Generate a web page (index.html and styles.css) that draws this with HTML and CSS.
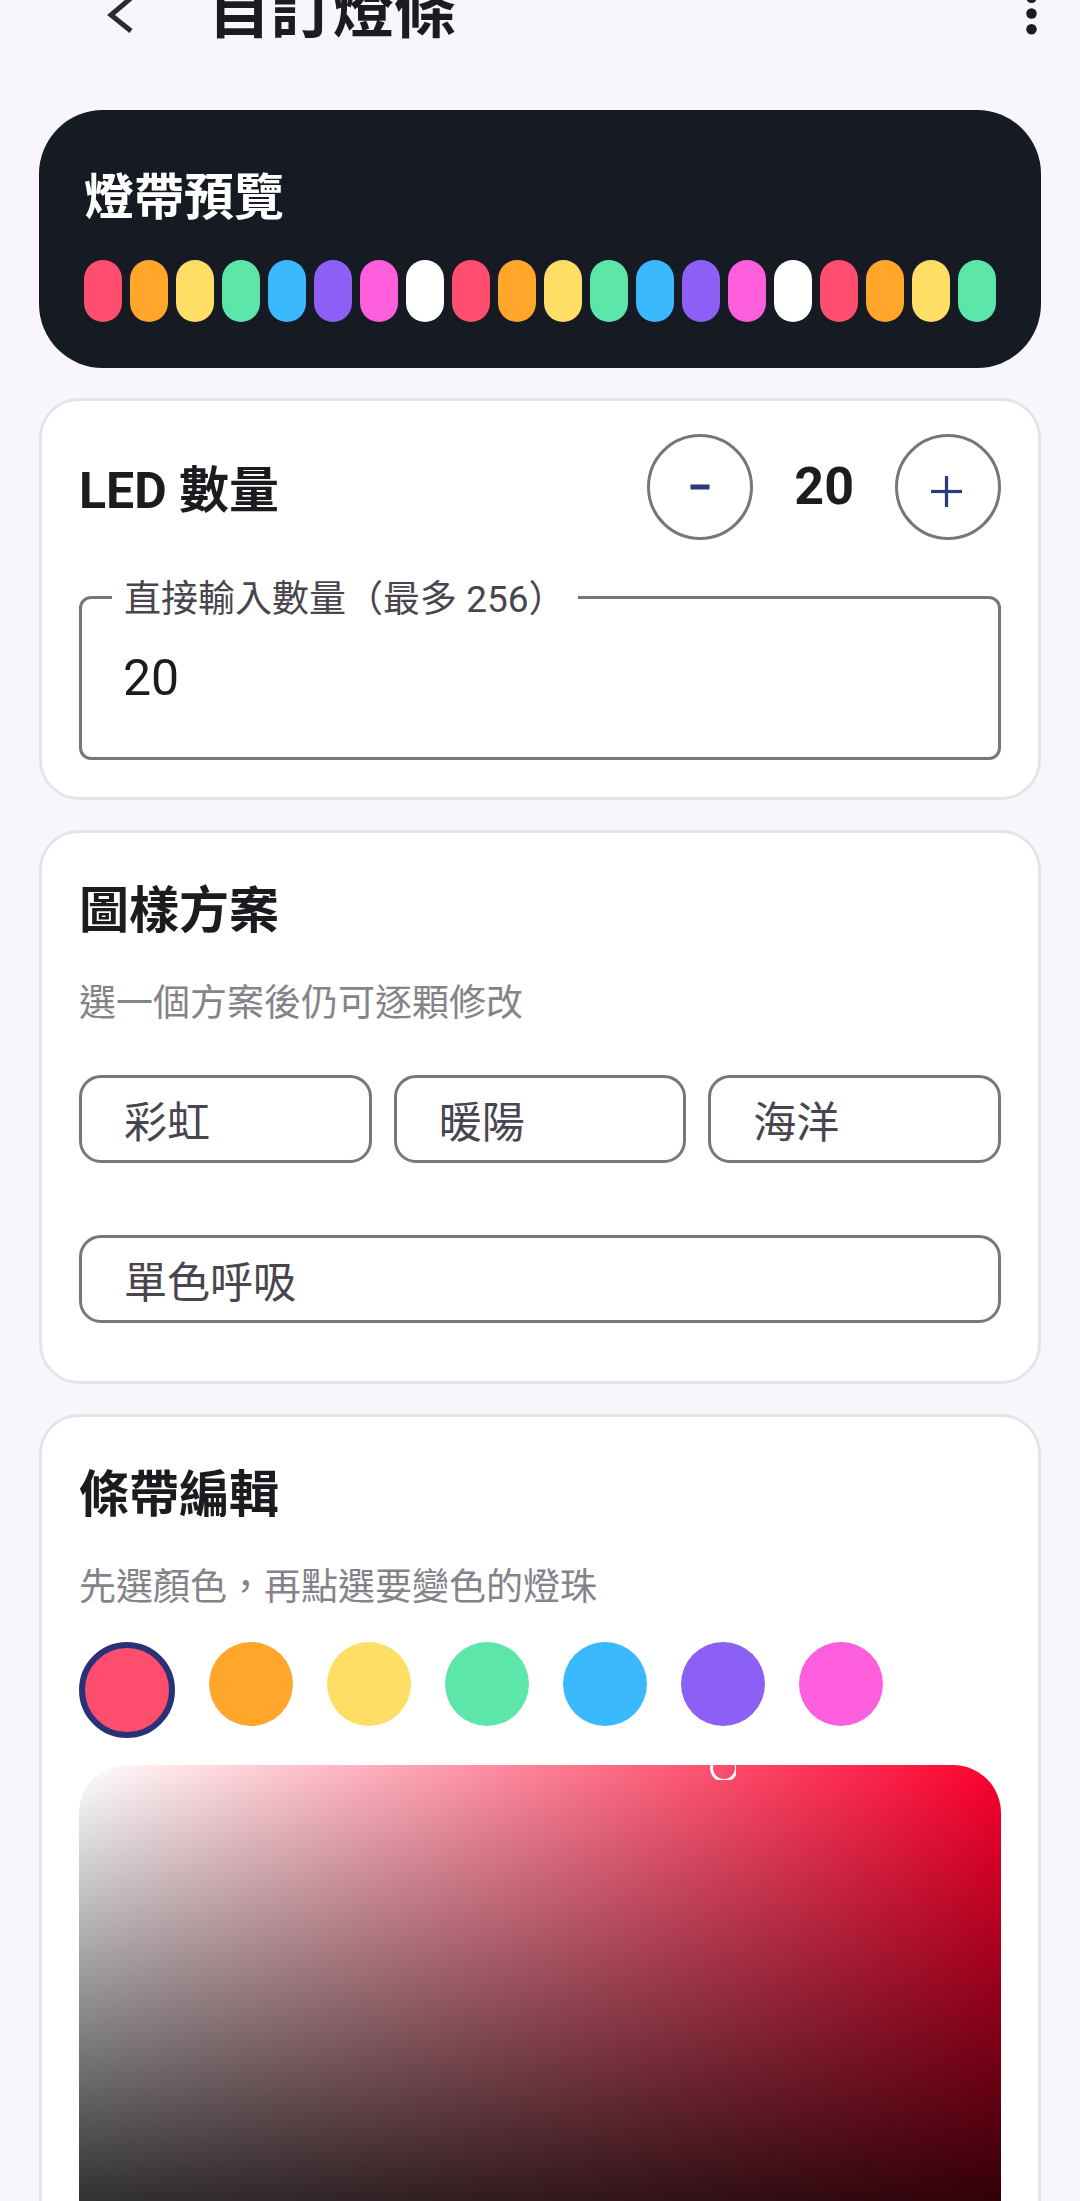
FILE: index.html
```html
<!DOCTYPE html>
<html lang="zh-Hant">
<head>
    <meta charset="UTF-8">
    <meta name="viewport" content="width=device-width, initial-scale=1.0">
    <title>自訂燈條</title>
    <link rel="stylesheet" href="styles.css">
</head>

<body>
    <header class="top-bar">
        <button class="icon-btn back-btn" aria-label="返回">
            <svg width="30" height="44" viewBox="0 0 30 44">
                <polyline points="26,8 6,25 26,41" fill="none" stroke="#2b2b30" stroke-width="5" stroke-linejoin="miter"/>
            </svg>
        </button>
        <h1 class="top-title">自訂燈條</h1>
        <button class="icon-btn more-btn" aria-label="更多">
            <svg width="63" height="63" viewBox="0 0 63 63">
                <circle cx="31.5" cy="15.75" r="5.25" fill="#1c1b1f"/>
                <circle cx="31.5" cy="31.5" r="5.25" fill="#1c1b1f"/>
                <circle cx="31.5" cy="47.25" r="5.25" fill="#1c1b1f"/>
            </svg>
        </button>
    </header>

    <main class="content">
        <!-- Preview -->
        <section class="card preview-card">
            <h2 class="preview-title">燈帶預覽</h2>
            <div class="led-strip">
                <span class="led red"></span>
                <span class="led orange"></span>
                <span class="led yellow"></span>
                <span class="led green"></span>
                <span class="led blue"></span>
                <span class="led purple"></span>
                <span class="led pink"></span>
                <span class="led white"></span>
                <span class="led red"></span>
                <span class="led orange"></span>
                <span class="led yellow"></span>
                <span class="led green"></span>
                <span class="led blue"></span>
                <span class="led purple"></span>
                <span class="led pink"></span>
                <span class="led white"></span>
                <span class="led red"></span>
                <span class="led orange"></span>
                <span class="led yellow"></span>
                <span class="led green"></span>
            </div>
        </section>

        <!-- LED count -->
        <section class="card count-card">
            <div class="count-row">
                <h2 class="card-title">LED 數量</h2>
                <div class="stepper">
                    <button class="step-btn" aria-label="減少">
                        <svg width="40" height="40" viewBox="0 0 40 40">
                            <rect x="10.5" y="17.5" width="19" height="5" fill="#2b3a7c"/>
                        </svg>
                    </button>
                    <span class="step-value">20</span>
                    <button class="step-btn" aria-label="增加">
                        <svg width="40" height="40" viewBox="0 0 40 40">
                            <line x1="3" y1="24.5" x2="34" y2="24.5" stroke="#2b3a7c" stroke-width="3.2"/>
                            <line x1="18.5" y1="9" x2="18.5" y2="40" stroke="#2b3a7c" stroke-width="3.2"/>
                        </svg>
                    </button>
                </div>
            </div>
            <div class="field">
                <span class="field-label">直接輸入數量（最多 256）</span>
                <span class="field-value">20</span>
            </div>
        </section>

        <!-- Patterns -->
        <section class="card">
            <h2 class="card-title">圖樣方案</h2>
            <p class="card-subtitle">選一個方案後仍可逐顆修改</p>
            <div class="pattern-grid">
                <button class="pattern-btn">彩虹</button>
                <button class="pattern-btn">暖陽</button>
                <button class="pattern-btn">海洋</button>
                <button class="pattern-btn wide">單色呼吸</button>
            </div>
        </section>

        <!-- Strip editor -->
        <section class="card editor-card">
            <h2 class="card-title">條帶編輯</h2>
            <p class="card-subtitle">先選顏色，再點選要變色的燈珠</p>
            <div class="swatches">
                <span class="swatch red selected"></span>
                <span class="swatch orange"></span>
                <span class="swatch yellow"></span>
                <span class="swatch green"></span>
                <span class="swatch blue"></span>
                <span class="swatch purple"></span>
                <span class="swatch pink"></span>
            </div>
            <div class="picker">
                <span class="picker-thumb"></span>
            </div>
        </section>
    </main>
</body>
</html>
```

FILE: styles.css
```css
* {
    box-sizing: border-box;
}

body {
    margin: 0;
    background-color: #f8f6fb;
    font-family: Roboto, "Noto Sans CJK TC", sans-serif;
    color: #1c1b1f;
}

button {
    font-family: inherit;
    cursor: pointer;
}

/* Top bar */
.top-bar {
    display: flex;
    align-items: center;
    height: 80px;
    margin-top: -28px;
}

.icon-btn {
    background: none;
    border: none;
    padding: 0;
    display: flex;
}

.back-btn {
    margin-left: 105px;
}

.top-title {
    margin: 0 0 0 73px;
    font-size: 62px;
    line-height: 80px;
    font-weight: 700;
}

.more-btn {
    margin-left: auto;
    margin-right: 17px;
    margin-top: 2px;
}

/* Layout */
.content {
    display: flex;
    flex-direction: column;
    gap: 30px;
    padding: 58px 39px 0;
}

.card {
    background-color: #fff;
    border: 3px solid #e6e4ea;
    border-radius: 40px;
    padding: 44px 37px 58px;
}

/* Preview */
.preview-card {
    background-color: #161a22;
    border: none;
    border-radius: 64px;
    padding: 54px 45px 46px;
}

.preview-title {
    margin: 0;
    font-size: 50px;
    line-height: 68px;
    font-weight: 700;
    color: #fff;
}

.led-strip {
    display: flex;
    gap: 8px;
    margin-top: 28px;
}

.led {
    flex: 1;
    height: 62px;
    border-radius: 19px;
}

.red { background-color: #ff4d6d; }
.orange { background-color: #ffa62b; }
.yellow { background-color: #ffde66; }
.green { background-color: #5ce6a9; }
.blue { background-color: #3bb9ff; }
.purple { background-color: #8c5ff5; }
.pink { background-color: #ff5fdc; }
.white { background-color: #ffffff; }

/* Titles */
.card-title {
    margin: 0;
    font-size: 50px;
    line-height: 68px;
    font-weight: 700;
}

.card-subtitle {
    margin: 33px 0 0;
    font-size: 37px;
    line-height: 52px;
    color: #858389;
}

/* LED count */
.count-card {
    padding: 33px 37px 37px;
}

.count-row {
    display: flex;
    align-items: center;
    justify-content: space-between;
    height: 106px;
}

.count-row .card-title {
    margin-top: 8px;
}

.stepper {
    display: flex;
    align-items: center;
    gap: 41px;
}

.step-btn {
    width: 106px;
    height: 106px;
    border-radius: 50%;
    border: 3px solid #79747e;
    background: none;
    padding: 0;
    display: flex;
    align-items: center;
    justify-content: center;
}

.step-value {
    font-size: 52px;
    line-height: 60px;
    font-weight: 700;
}

.field {
    position: relative;
    margin-top: 56px;
    height: 164px;
    border: 3px solid #79747e;
    border-radius: 12px;
    display: flex;
    align-items: center;
    padding-left: 41px;
}

.field-label {
    position: absolute;
    left: 30px;
    top: -21px;
    padding: 0 12px;
    background-color: #fff;
    font-size: 37px;
    line-height: 44px;
    color: #49454f;
}

.field-value {
    font-size: 50px;
    line-height: 60px;
}

/* Patterns */
.pattern-grid {
    display: grid;
    grid-template-columns: repeat(3, 1fr);
    column-gap: 22px;
    row-gap: 72px;
    margin-top: 45px;
}

.pattern-btn {
    height: 88px;
    border: 3px solid #79747e;
    border-radius: 22px;
    background-color: #fff;
    padding: 0 0 0 42px;
    text-align: left;
    font-size: 43px;
    color: #49454f;
}

.pattern-btn.wide {
    grid-column: 1 / -1;
}

/* Strip editor */
.swatches {
    display: flex;
    align-items: flex-start;
    gap: 34px;
    margin-top: 28px;
}

.swatch {
    width: 84px;
    height: 84px;
    border-radius: 50%;
}

.swatch.selected {
    width: 96px;
    height: 96px;
    border: 6px solid #283377;
}

.picker {
    position: relative;
    margin-top: 27px;
    height: 540px;
    border-radius: 48px;
    background-image:
        linear-gradient(to bottom, rgba(0, 0, 0, 0), #000),
        linear-gradient(to right, #fff, #ff002d);
}

.picker-thumb {
    position: absolute;
    left: 631px;
    top: -5px;
    width: 26px;
    height: 20px;
    overflow: hidden;
}

.picker-thumb::after {
    content: "";
    display: block;
    width: 22px;
    height: 22px;
    margin: -6px auto 0;
    border: 3px solid #fff;
    border-radius: 50%;
}
```
